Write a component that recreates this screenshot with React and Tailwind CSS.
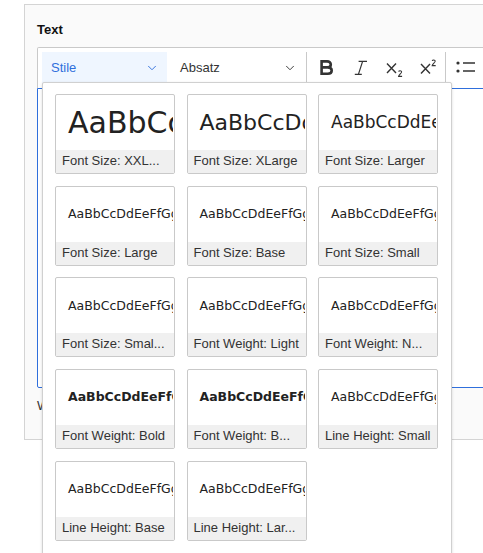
import React from "react";
import { ChevronDown } from "lucide-react";

const styles = [
  { label: "Font Size: XXL...", preview: "AaBbCcDdEeFfGg", cls: "text-[30px]", row: "h-[57px]" },
  { label: "Font Size: XLarge", preview: "AaBbCcDdEeFfGg", cls: "text-[22px]" },
  { label: "Font Size: Larger", preview: "AaBbCcDdEeFfGg", cls: "text-[17px]" },
  { label: "Font Size: Large", preview: "AaBbCcDdEeFfGg", cls: "text-[12.5px]" },
  { label: "Font Size: Base", preview: "AaBbCcDdEeFfGg", cls: "text-[12.5px]" },
  { label: "Font Size: Small", preview: "AaBbCcDdEeFfGg", cls: "text-[12.5px]" },
  { label: "Font Size: Smal...", preview: "AaBbCcDdEeFfGg", cls: "text-[12.5px]" },
  { label: "Font Weight: Light", preview: "AaBbCcDdEeFfGg", cls: "text-[12.5px]" },
  { label: "Font Weight: N...", preview: "AaBbCcDdEeFfGg", cls: "text-[12.5px]" },
  { label: "Font Weight: Bold", preview: "AaBbCcDdEeFfGg", cls: "text-[12.5px] font-bold" },
  { label: "Font Weight: B...", preview: "AaBbCcDdEeFfGg", cls: "text-[12.5px] font-bold" },
  { label: "Line Height: Small", preview: "AaBbCcDdEeFfGg", cls: "text-[12.5px]" },
  { label: "Line Height: Base", preview: "AaBbCcDdEeFfGg", cls: "text-[12.5px]" },
  { label: "Line Height: Lar...", preview: "AaBbCcDdEeFfGg", cls: "text-[12.5px]" },
];

const StyleCard = ({ item }) => (
  <div className="flex h-[80px] flex-col overflow-hidden rounded-[2px] border border-[#c9c9c9] bg-white">
    <div className="flex min-h-0 flex-1 items-center overflow-hidden mr-[1px] pl-[12px]">
      <span className={`whitespace-nowrap font-['DejaVu_Sans',sans-serif] text-[#222] ${item.cls}`}>
        {item.preview}
      </span>
    </div>
    <div className="h-[23px] whitespace-nowrap bg-[#f0f0f0] pl-[6px] text-[13px] leading-[22px] text-[#333]">
      {item.label}
    </div>
  </div>
);

const BoldIcon = () => (
  <svg width="20" height="20" viewBox="0 0 20 20" fill="none" stroke="#333" strokeWidth="2.6">
    <path d="M4.6 3.4h5.6c2.2 0 3.6 1.1 3.6 3 0 1.9-1.4 3-3.6 3H4.6zM4.6 9.4h6.2c2.4 0 3.9 1.2 3.9 3.2 0 2-1.5 3.2-3.9 3.2H4.6zM4.6 2.2v14.8" />
  </svg>
);

const ItalicIcon = () => (
  <svg width="20" height="20" viewBox="0 0 20 20" fill="none" stroke="#333" strokeWidth="1.2">
    <path d="M7.6 3.4h8.4M3.8 16.4h7M11.6 3.4L7.4 16.4" />
  </svg>
);

const SubIcon = () => (
  <svg width="20" height="20" viewBox="0 0 20 20" fill="none" stroke="#333">
    <path strokeWidth="1.4" d="M2 5.5l9 9.5M11 5.5l-9 9.5" />
    <path strokeWidth="1.1" d="M13.6 13.6c.3-1 2.9-1.2 3 .3.1 1.400-2.600 2.600-3 4.500h3.500" />
  </svg>
);

const SupIcon = () => (
  <svg width="20" height="20" viewBox="0 0 20 20" fill="none" stroke="#333">
    <path strokeWidth="1.4" d="M2 6l9 9.500M11 6l-9 9.500" />
    <path strokeWidth="1.1" d="M13.200 2.800c.3-1 2.900-1.200 3 .3.100 1.400-2.600 2.600-3 4.500h3.500" />
  </svg>
);

const ListIcon = () => (
  <svg width="20" height="20" viewBox="0 0 20 20" fill="none" stroke="#333">
    <circle cx="3" cy="5" r="1.600" fill="#333" stroke="none" />
    <circle cx="3" cy="13" r="1.600" fill="#333" stroke="none" />
    <path strokeWidth="1.500" d="M8 5h12M8 13h12" />
  </svg>
);

const App = () => {
  return (
    <div className="relative h-[553px] w-[483px] overflow-hidden bg-white font-['Liberation_Sans',Arial,sans-serif]">
      {/* outer field panel */}
      <div className="ml-[24px] mt-[4px] h-[436px] w-[470px] border border-[#d4d4d4] bg-[#fafafa] pl-[12px] pt-[17px]">
        <div className="h-[25px] text-[13px] font-bold leading-[15px] text-[#111]">Text</div>

        {/* toolbar */}
        <div className="flex h-[41px] w-[460px] items-start rounded-t-[2px] border border-b-0 border-[#c9c9c9] bg-white pl-[4px] pt-[4px]">
          <div className="flex h-[32px] w-[125px] items-center justify-between bg-[#eff6ff] pl-[9px] pr-[8px] text-[13px] text-[#2f6fdc]">
            <span>Stile</span>
            <ChevronDown size={14} strokeWidth={1.6} className="text-[#2f6fdc]" />
          </div>
          <div className="flex h-[32px] w-[139px] items-center justify-between pl-[13px] pr-[9px] text-[13px] text-[#333]">
            <span>Absatz</span>
            <ChevronDown size={14} strokeWidth={1.6} className="text-[#333]" />
          </div>
          <div className="h-[32px] w-px bg-[#c9c9c9]" />
          <div className="flex h-[32px] items-center gap-[14px] pl-[10px] pr-[6px]">
            <BoldIcon />
            <ItalicIcon />
            <SubIcon />
            <SupIcon />
          </div>
          <div className="h-[32px] w-px bg-[#c9c9c9]" />
          <div className="flex h-[32px] items-center pl-[9px]">
            <ListIcon />
          </div>
        </div>

        {/* editor body */}
        <div className="h-[300px] w-[460px] rounded-bl-[2px] border border-[#2f6fdc] bg-white" />
        <div className="mt-[10px] text-[13px] leading-[15px] text-[#333]">Weitere</div>
      </div>

      {/* styles dropdown */}
      <div className="absolute left-[42px] top-[82px] w-[410px] rounded-[2px] border border-[#d0d0d0] bg-white pb-[20px] pl-[12px] pt-[11px] shadow-[0_1px_3px_rgba(0,0,0,0.15)]">
        <div className="grid grid-cols-[120px_120px_120px] gap-x-[11.5px] gap-y-[11.7px]">
          {styles.map((item) => (
            <StyleCard key={item.label} item={item} />
          ))}
        </div>
      </div>
    </div>
  );
};

export default App;
